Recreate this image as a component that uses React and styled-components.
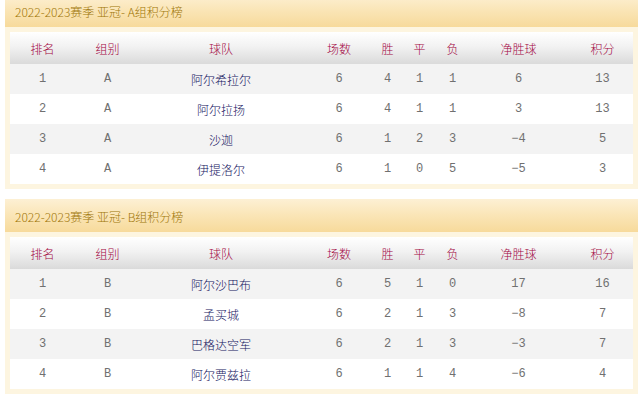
import styled, { createGlobalStyle } from "styled-components";

const GlobalStyle = createGlobalStyle`
  body {
    margin: 0;
    background: #ffffff;
    font-family: "Noto Sans CJK SC", "Liberation Sans", sans-serif;
  }
`;

const COLUMNS = ["排名", "组别", "球队", "场数", "胜", "平", "负", "净胜球", "积分"];

const groups = [
  {
    title: "2022-2023赛季 亚冠- A组积分榜",
    rows: [
      [1, "A", "阿尔希拉尔", 6, 4, 1, 1, "6", 13],
      [2, "A", "阿尔拉扬", 6, 4, 1, 1, "3", 13],
      [3, "A", "沙迦", 6, 1, 2, 3, "−4", 5],
      [4, "A", "伊提洛尔", 6, 1, 0, 5, "−5", 3],
    ],
  },
  {
    title: "2022-2023赛季 亚冠- B组积分榜",
    rows: [
      [1, "B", "阿尔沙巴布", 6, 5, 1, 0, "17", 16],
      [2, "B", "孟买城", 6, 2, 1, 3, "−8", 7],
      [3, "B", "巴格达空军", 6, 2, 1, 3, "−3", 7],
      [4, "B", "阿尔贾兹拉", 6, 1, 1, 4, "−6", 4],
    ],
  },
];

const App = () => {
  return (
    <>
      <GlobalStyle />
      <Page>
        {groups.map((group) => (
          <Section key={group.title}>
            <TitleBar>{group.title}</TitleBar>
            <Box>
              <HeadRow>
                {COLUMNS.map((c) => (
                  <HeadCell key={c}>{c}</HeadCell>
                ))}
              </HeadRow>
              {group.rows.map((row, i) => (
                <Row key={row[0]} $striped={i % 2 === 0}>
                  {row.map((value, j) =>
                    j === 2 ? (
                      <TeamCell key={j}>{value}</TeamCell>
                    ) : (
                      <Cell key={j}>{value}</Cell>
                    )
                  )}
                </Row>
              ))}
            </Box>
          </Section>
        ))}
      </Page>
    </>
  );
};

export default App;

const Page = styled.div`
  margin: -6px 0 0 5px;
  display: flex;
  flex-direction: column;
  gap: 10px;
`;

const Section = styled.div`
  display: flex;
  flex-direction: column;
`;

const TitleBar = styled.div`
  height: 33px;
  box-sizing: border-box;
  padding: 11px 0 0 10px;
  background: linear-gradient(to bottom, #fdf0d4 0%, #fae5b6 50%, #f7da9b 100%);
  color: #a07608;
  font-size: 12px;
  font-weight: 300;
  line-height: 14px;
  white-space: pre;
`;

const Box = styled.div`
  background: #fdf5e0;
  padding: 5px;
  display: flex;
  flex-direction: column;
`;

const grid = `
  display: grid;
  grid-template-columns: 65px 65px 162px 74px 23px 41px 25px 107px 1fr;
  align-items: center;
`;

const HeadRow = styled.div`
  ${grid}
  height: 32px;
  background: linear-gradient(to bottom, #ffffff 0%, #f2f2f2 45%, #dadada 100%);
`;

const HeadCell = styled.div`
  text-align: center;
  color: #a3063f;
  font-size: 12px;
  font-weight: 300;
`;

const Row = styled.div`
  ${grid}
  height: 30px;
  background: ${(p) => (p.$striped ? "#f3f3f3" : "#ffffff")};
`;

const Cell = styled.div`
  text-align: center;
  color: #707070;
  font-family: "Liberation Mono", "Noto Sans CJK SC", monospace;
  font-size: 12px;
`;

const TeamCell = styled.div`
  text-align: center;
  color: #12125e;
  font-size: 12px;
  font-weight: 300;
`;
